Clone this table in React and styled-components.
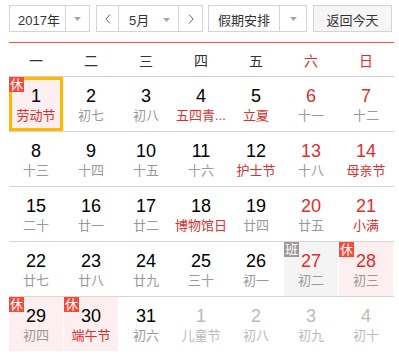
import React from 'react';
import styled, { createGlobalStyle } from 'styled-components';

const Global = createGlobalStyle`
  body {
    margin: 0;
    background: #fff;
    font-family: "Liberation Sans", Arial, "Noto Sans CJK SC", sans-serif;
  }
`;

const RED = '#e02d2d';
const BORDER = '#d4d4d4';

const Wrap = styled.div`
  padding: 5px 0 0 9px;
  width: 385px;
`;

const Toolbar = styled.div`
  display: flex;
  height: 27px;
  font-size: 13px;
  color: #333;
`;

const Box = styled.div`
  box-sizing: border-box;
  display: flex;
  width: ${(p) => p.$w}px;
  margin-left: ${(p) => p.$ml || 0}px;
  border: 1px solid ${BORDER};
  background: ${(p) => p.$bg || '#fff'};
`;

const Label = styled.div`
  flex: 1;
  display: flex;
  align-items: center;
  justify-content: ${(p) => p.$justify || 'center'};
  padding: ${(p) => p.$pad || '0'};
  padding-top: 2px;
`;

const ArrowCell = styled.div`
  width: ${(p) => p.$w}px;
  box-sizing: border-box;
  border-left: ${(p) => (p.$divider ? `1px solid ${BORDER}` : 'none')};
  display: flex;
  align-items: center;
  justify-content: center;
`;

const Tri = () => (
  <svg width="7" height="4" viewBox="0 0 7 4">
    <path d="M0 0H7L3.5 4Z" fill="#a6a6a6" />
  </svg>
);

const Chevron = ({ dir }) => (
  <svg width="6" height="10" viewBox="0 0 6 10">
    <path
      d={dir === 'left' ? 'M5 0.5L1 5L5 9.5' : 'M1 0.5L5 5L1 9.5'}
      fill="none"
      stroke="#666"
      strokeWidth="1"
    />
  </svg>
);

const Button = styled.div`
  box-sizing: border-box;
  width: ${(p) => p.$w}px;
  margin-left: ${(p) => p.$ml || 0}px;
  border: 1px solid ${BORDER};
  background: #f6f6f6;
  display: flex;
  align-items: center;
  justify-content: center;
  padding-top: 2px;
`;

const Table = styled.div`
  margin-top: 10px;
  border-top: 1px solid #f5533d;
`;

const Header = styled.div`
  display: grid;
  grid-template-columns: repeat(7, 54px);
  column-gap: 1px;
  height: 33px;
  border-bottom: 1px solid #cfcfcf;
  font-size: 14px;
`;

const HeadCell = styled.div`
  display: flex;
  align-items: center;
  justify-content: center;
  color: ${(p) => (p.$weekend ? RED : '#333')};
`;

const Row = styled.div`
  display: grid;
  grid-template-columns: repeat(7, 54px);
  column-gap: 1px;
  height: 54px;
  border-bottom: 1px solid #d6d6d6;
  &:last-child {
    border-bottom: none;
  }
`;

const bgFor = (t) => (t === 'rest' ? '#fdefef' : t === 'work' ? '#f4f4f4' : 'transparent');

const Cell = styled.div`
  position: relative;
  display: flex;
  flex-direction: column;
  align-items: center;
  padding-top: 8px;
  box-sizing: border-box;
  background: ${(p) => bgFor(p.$type)};
  box-shadow: ${(p) => (p.$today ? 'inset 0 0 0 3px #ffb900' : 'none')};
`;

const Num = styled.div`
  font-size: 18px;
  line-height: 22px;
  color: ${(p) => (p.$other ? '#bbb' : p.$red ? RED : '#000')};
`;

const Lunar = styled.div`
  width: 100%;
  text-align: center;
  font-size: 13px;
  line-height: 18px;
  white-space: nowrap;
  color: ${(p) => (p.$other ? '#bbb' : p.$red ? RED : '#999')};
`;

const Badge = styled.div`
  position: absolute;
  top: 0;
  left: 0;
  width: 15px;
  height: 15px;
  font-size: 13px;
  line-height: 15px;
  text-align: center;
  color: #fff;
  background: ${(p) => (p.$work ? '#9a9a9a' : '#f44a3a')};
`;

const WEEK = ['一', '二', '三', '四', '五', '六', '日'];

// d: day, l: lunar/festival, f: festival (red), t: rest/work, o: other month, today
const ROWS = [
  [
    { d: 1, l: '劳动节', f: 1, t: 'rest', today: 1 },
    { d: 2, l: '初七' },
    { d: 3, l: '初八' },
    { d: 4, l: '五四青...', f: 1 },
    { d: 5, l: '立夏', f: 1 },
    { d: 6, l: '十一' },
    { d: 7, l: '十二' },
  ],
  [
    { d: 8, l: '十三' },
    { d: 9, l: '十四' },
    { d: 10, l: '十五' },
    { d: 11, l: '十六' },
    { d: 12, l: '护士节', f: 1 },
    { d: 13, l: '十八' },
    { d: 14, l: '母亲节', f: 1 },
  ],
  [
    { d: 15, l: '二十' },
    { d: 16, l: '廿一' },
    { d: 17, l: '廿二' },
    { d: 18, l: '博物馆日', f: 1 },
    { d: 19, l: '廿四' },
    { d: 20, l: '廿五' },
    { d: 21, l: '小满', f: 1 },
  ],
  [
    { d: 22, l: '廿七' },
    { d: 23, l: '廿八' },
    { d: 24, l: '廿九' },
    { d: 25, l: '三十' },
    { d: 26, l: '初一' },
    { d: 27, l: '初二', t: 'work' },
    { d: 28, l: '初三', t: 'rest' },
  ],
  [
    { d: 29, l: '初四', t: 'rest' },
    { d: 30, l: '端午节', f: 1, t: 'rest' },
    { d: 31, l: '初六' },
    { d: 1, l: '儿童节', o: 1 },
    { d: 2, l: '初八', o: 1 },
    { d: 3, l: '初九', o: 1 },
    { d: 4, l: '初十', o: 1 },
  ],
];

export default function App() {
  return (
    <>
      <Global />
      <Wrap>
        <Toolbar>
          <Box $w={81}>
            <Label $justify="flex-start" $pad="0 0 0 8px">2017年</Label>
            <ArrowCell $w={24} $divider>
              <Tri />
            </ArrowCell>
          </Box>
          <Box $w={107} $ml={6}>
            <ArrowCell $w={21}>
              <Chevron dir="left" />
            </ArrowCell>
            <ArrowCell $w={1} $divider />
            <Label $justify="space-between" $pad="0 8px 0 10px">
              <span>5月</span>
              <Tri />
            </Label>
            <ArrowCell $w={24} $divider>
              <Chevron dir="right" />
            </ArrowCell>
          </Box>
          <Box $w={99} $ml={5}>
            <Label>假期安排</Label>
            <ArrowCell $w={27} $divider>
              <Tri />
            </ArrowCell>
          </Box>
          <Button $w={79} $ml={6}>返回今天</Button>
        </Toolbar>
        <Table>
          <Header>
            {WEEK.map((w, i) => (
              <HeadCell key={w} $weekend={i >= 5}>
                {w}
              </HeadCell>
            ))}
          </Header>
          {ROWS.map((row, ri) => (
            <Row key={ri}>
              {row.map((c, ci) => (
                <Cell key={ci} $type={c.t} $today={c.today}>
                  {c.t && <Badge $work={c.t === 'work'}>{c.t === 'work' ? '班' : '休'}</Badge>}
                  <Num $red={ci >= 5} $other={c.o}>
                    {c.d}
                  </Num>
                  <Lunar $red={c.f} $other={c.o}>
                    {c.l}
                  </Lunar>
                </Cell>
              ))}
            </Row>
          ))}
        </Table>
      </Wrap>
    </>
  );
}
